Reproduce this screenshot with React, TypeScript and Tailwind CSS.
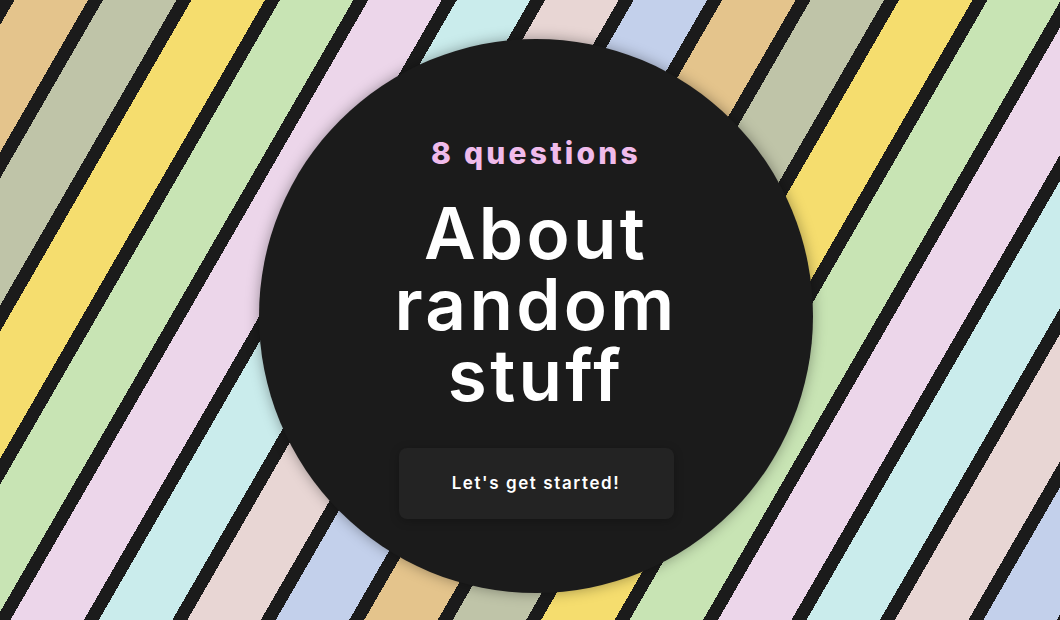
export default function App() {
  return (
    <main className="flex h-[620px] w-[1060px] items-center justify-center overflow-hidden bg-[#1b1b1b] bg-[image:repeating-linear-gradient(120deg,#1b1b1b_0px,#1b1b1b_12.6px,#e4c48c_12.6px,#e4c48c_76.2px,#1b1b1b_76.2px,#1b1b1b_89.2px,#bfc4a8_89.2px,#bfc4a8_152.8px,#1b1b1b_152.8px,#1b1b1b_165.8px,#f5dd6e_165.8px,#f5dd6e_229.4px,#1b1b1b_229.4px,#1b1b1b_242.4px,#c8e4b4_242.4px,#c8e4b4_306px,#1b1b1b_306px,#1b1b1b_319px,#ecd6ea_319px,#ecd6ea_382.6px,#1b1b1b_382.6px,#1b1b1b_395.6px,#caecec_395.6px,#caecec_459.2px,#1b1b1b_459.2px,#1b1b1b_472.2px,#e8d6d4_472.2px,#e8d6d4_535.8px,#1b1b1b_535.8px,#1b1b1b_548.8px,#c3d0eb_548.8px,#c3d0eb_612.4px,#1b1b1b_612.4px,#1b1b1b_612.8px)] pl-3 pt-3 font-['Inter','Noto_Sans',sans-serif]">
      {/* quiz card */}
      <section className="flex h-[554px] w-[554px] flex-col items-center rounded-full bg-[#1b1b1b] pt-[96px] shadow-[0_0_14px_rgba(0,0,0,0.35)]">
        <p className="text-[30px] leading-[36px] font-extrabold tracking-[3.2px] text-[#f0bbeb]">8 questions</p>
        <h1 className="mt-[27px] text-center text-[71px] leading-[71px] font-semibold tracking-[3.3px] text-white">
          About
          <br />
          random
          <br />
          stuff
        </h1>
        <button className="mt-[37px] flex h-[71px] w-[275px] items-center justify-center rounded-lg bg-[#232323] text-[17px] font-semibold tracking-[1.6px] text-white shadow-[0_2px_10px_rgba(0,0,0,0.25)]">
          Let's get started!
        </button>
      </section>
    </main>
  );
}
